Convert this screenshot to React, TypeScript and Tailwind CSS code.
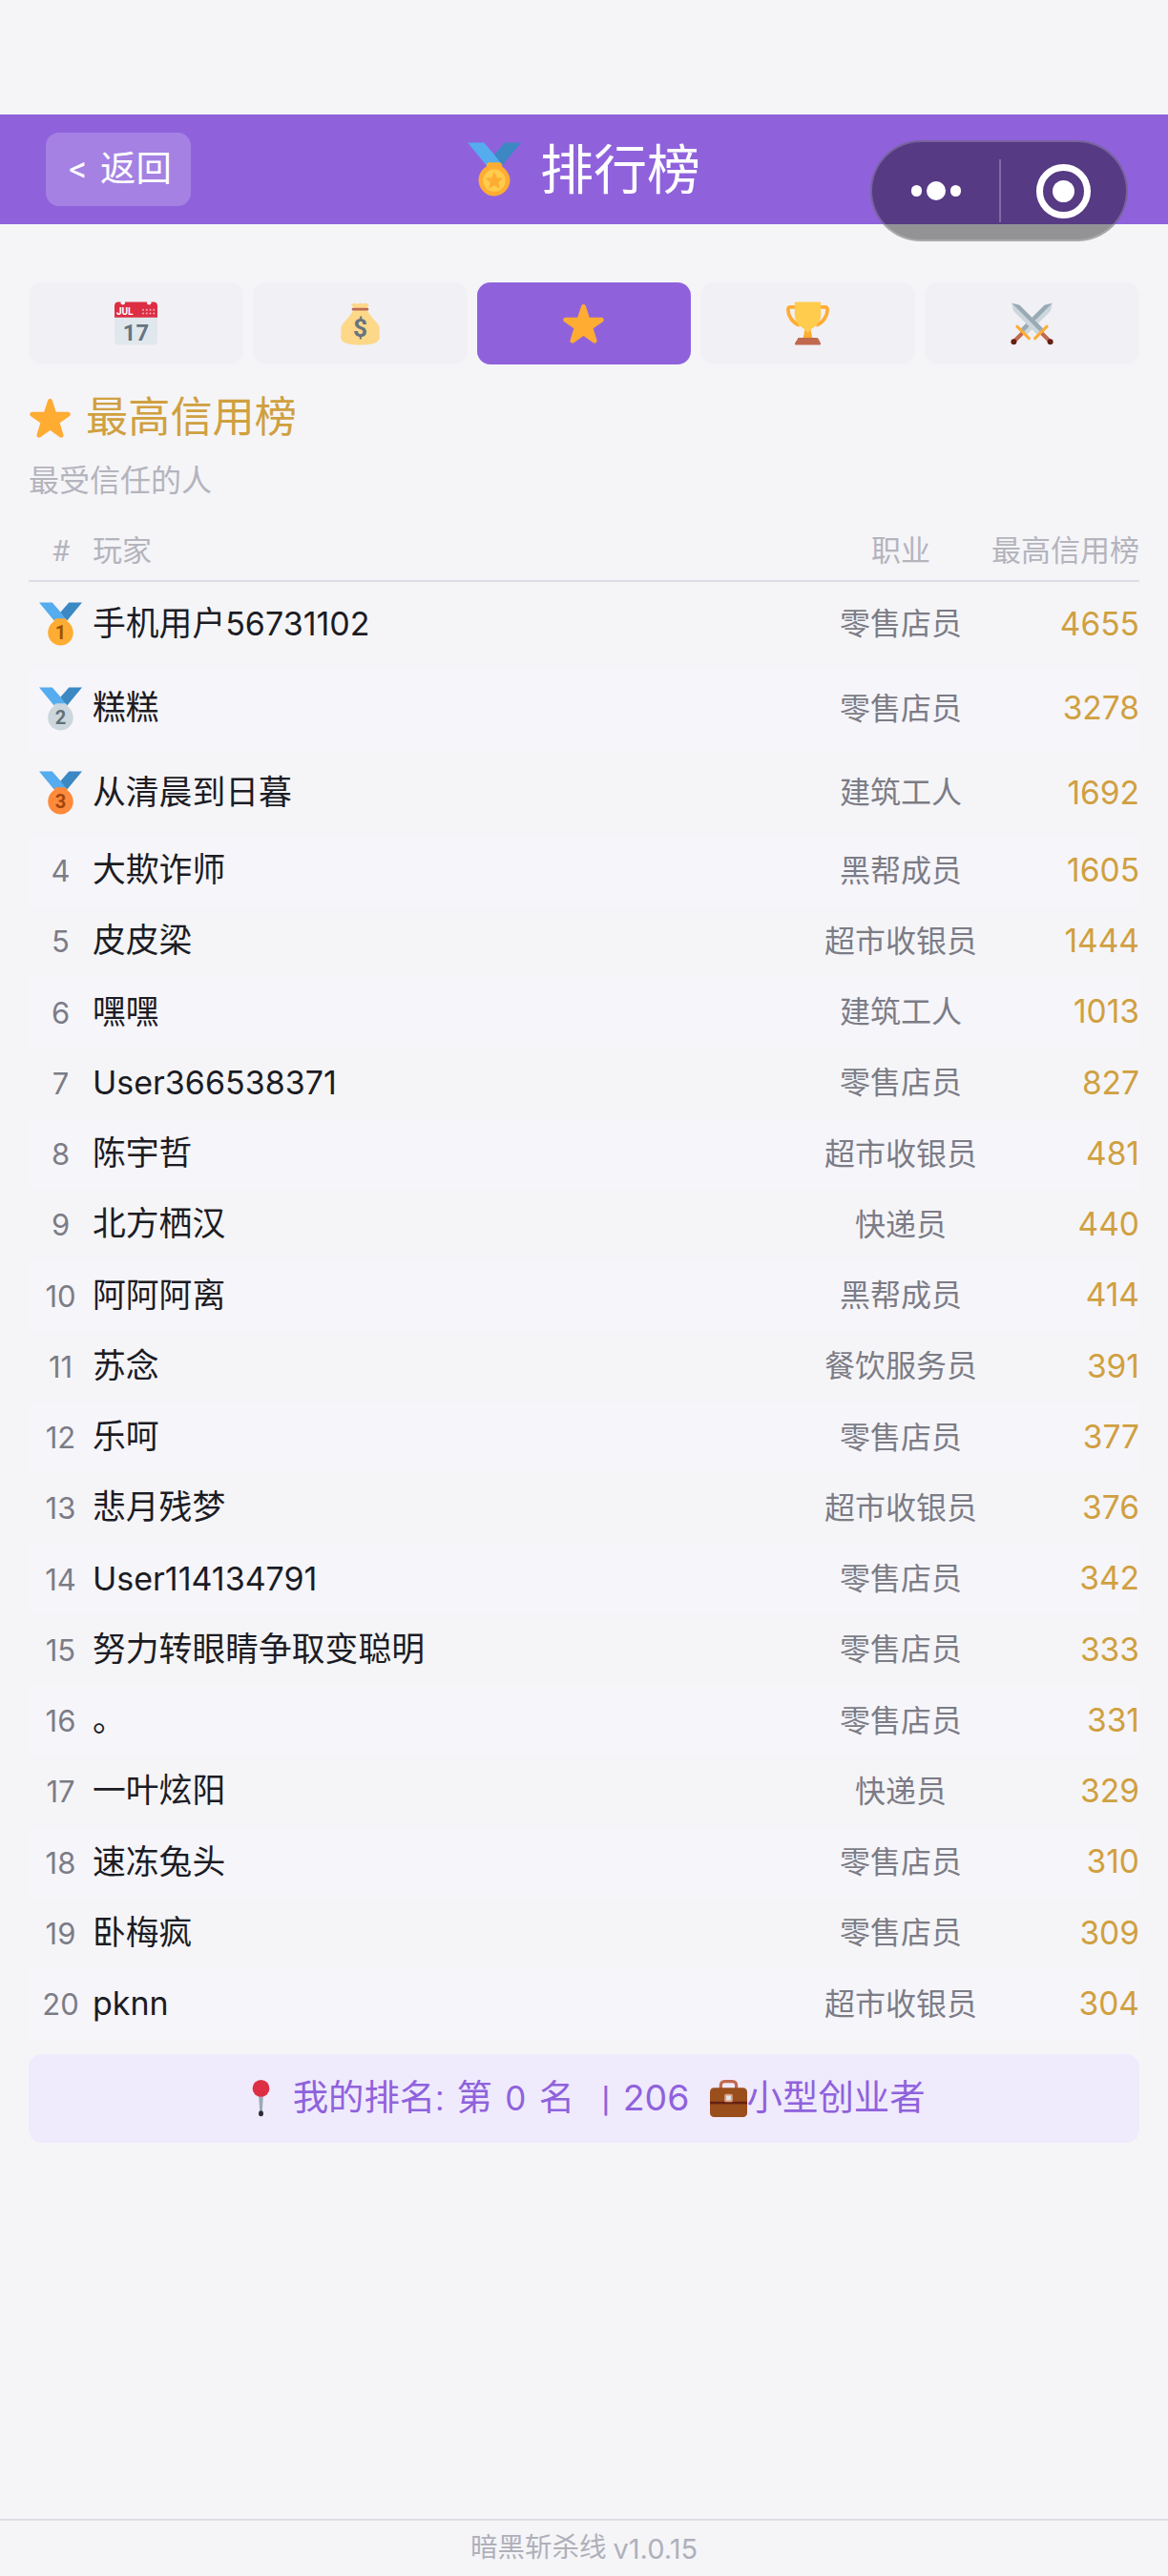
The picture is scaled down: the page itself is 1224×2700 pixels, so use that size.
import React from "react";

const Ribbon = () => (
  <>
    <path fill="#55ACEE" d="M18 8L11 0H0l14 17 11.5-4.75z" />
    <path fill="#3B88C3" d="M25 0l-7 8 5.4 7.3 1.2-1.5L36 0z" />
  </>
);

const RankMedal = ({ n }: { n: number }) => {
  const fill = n === 1 ? "#FFAC33" : n === 2 ? "#CCD6DD" : "#FF8A3B";
  const ink = n === 1 ? "#9E5200" : n === 2 ? "#627077" : "#A0460F";
  return (
    <svg viewBox="0 0 36 36" className="w-[45px] h-[46px] block">
      <Ribbon />
      <path fill={fill} d="M23.2 15.500c.1-.2.1-.2.1-.2 0-1.100-.9-2-2-2h-6.600c-1.100 0-2 .9-2 2 0 0 0 0 .1.200-3.200 1.800-5.400 5.800-5.400 9.800C7.400 31.200 12.200 36 18 36s10.600-4.800 10.600-10.700c0-4-2.200-8-5.400-9.800z" />
      <text x="18" y="31" textAnchor="middle" fontSize="16" fontWeight="700" fontFamily="Roboto, sans-serif" fill={ink}>{n}</text>
    </svg>
  );
};

const SportsMedal = () => (
  <svg viewBox="0 0 36 36" className="w-[56px] h-[57px] block">
    <Ribbon />
    <path fill="#FFAC33" d="M23.2 16c.1-.2.1-.4.1-.7 0-1.100-.9-2-2-2h-6.600c-1.100 0-2 .9-2 2 0 .3 0 .5.1.7-3.200 1.800-5.400 5.300-5.400 9.300C7.400 31.200 12.500 36 18 36s10.600-4.800 10.600-10.700c0-4-2.800-7.500-5.400-9.300z" />
    <circle cx="18" cy="25.500" r="7.500" fill="#FFCC4D" />
    <path fill="#FFAC33" d="M18 19.500l1.700 4.100 4.300.3-3.300 2.800 1 4.300-3.700-2.300-3.700 2.300 1-4.300-3.300-2.800 4.300-.3z" />
  </svg>
);

const Star = ({ cls }: { cls: string }) => (
  <svg viewBox="0 0 36 36" className={cls}>
    <path fill="#FFAC33" d="M27.287 34.627c-.404 0-.806-.124-1.152-.371L18 28.422l-8.135 5.834c-.693.496-1.623.496-2.312-.008-.689-.499-.979-1.385-.721-2.194l3.034-9.792-8.062-5.681c-.685-.505-.97-1.393-.708-2.203.264-.808 1.016-1.357 1.866-1.363L12.947 13l3.179-9.549c.268-.809 1.023-1.353 1.874-1.353.851 0 1.606.545 1.875 1.353L23 13l10.036.015c.853.006 1.606.556 1.867 1.363.263.81-.022 1.698-.708 2.203l-8.062 5.681 3.034 9.792c.26.809-.033 1.695-.72 2.194-.347.254-.753.379-1.16.379z" />
  </svg>
);

const Calendar = () => (
  <svg viewBox="0 0 36 36" className="w-[45px] h-[46px] block">
    <path fill="#E1E8ED" d="M36 33c0 1.700-1.300 3-3 3H3c-1.700 0-3-1.300-3-3V8h36z" />
    <path fill="#DD2E44" d="M36 13H0V3c0-1.700 1.300-3 3-3h30c1.700 0 3 1.300 3 3z" />
    <circle cx="7" cy="0.500" r="1.800" fill="#F2F1F6" />
    <circle cx="29" cy="0.500" r="1.800" fill="#F2F1F6" />
    <text x="1.500" y="10.500" fontSize="8" fontWeight="700" fontFamily="Roboto, sans-serif" fill="#fff">JUL</text>
    <g fill="#F4ABBA">
      <circle cx="24" cy="6.500" r=".8" /><circle cx="27" cy="6.500" r=".8" /><circle cx="30" cy="6.500" r=".8" /><circle cx="33" cy="6.500" r=".8" />
      <circle cx="24" cy="9.500" r=".8" /><circle cx="27" cy="9.500" r=".8" /><circle cx="30" cy="9.500" r=".8" /><circle cx="33" cy="9.500" r=".8" />
    </g>
    <text x="18" y="32" textAnchor="middle" fontSize="19" fontWeight="700" fontFamily="Roboto, sans-serif" fill="#66757F">17</text>
  </svg>
);

const MoneyBag = () => (
  <svg viewBox="0 0 36 36" className="w-[45px] h-[46px] block">
    <path fill="#FDD888" d="M12 7h12c1 3 4 6 7.500 10 3 3.500 3 5 2.500 8-.5 3 1 3 0 6-1 3-5 5-16 5S3 34 2 31s.5-3 0-6-.5-4.500 2.500-8C8 13 11 10 12 7z" />
    <path fill="#FDD888" d="M10.500 1.500c1 .6 2-.8 3.200-.4 1.300.4 1.800 1 3 .2s2.200-.6 3.200.1c1 .6 1.800-.5 3-.3 1.300.2 2.400.3 2.100 1.500-.3 1.100-1.300 1.700-1.500 2.900H12.500c-.2-1.200-1.300-1.800-1.800-2.800-.3-.5-.4-1-.2-1.200z" />
    <rect x="11" y="5" width="14" height="2.200" rx="1" fill="#BF6952" />
    <text x="18" y="29.500" textAnchor="middle" fontSize="21" fontWeight="700" fontFamily="Roboto, sans-serif" fill="#67757F">$</text>
  </svg>
);

const Trophy = () => (
  <svg viewBox="0 0 36 36" className="w-[45px] h-[46px] block">
    <path fill="none" stroke="#FFAC33" strokeWidth="3" d="M8 4.200H3.500C2 4.200 1.500 5 1.500 6.500c0 5 3.500 11 9.500 13" />
    <path fill="none" stroke="#FFAC33" strokeWidth="3" d="M28 4.200h4.500c1.500 0 2 .8 2 2.300 0 5-3.500 11-9.500 13" />
    <path fill="#FFAC33" d="M15.800 22h4.400l1.800 8.500H14z" />
    <path fill="#FFCC4D" d="M7 1c0-.6.4-1 1-1h20c.6 0 1 .4 1 1v9c0 7-4 10-7 12-2 1.300-3 2-3 3.500h-2c0-1.500-1-2.200-3-3.500-3-2-7-5-7-12z" />
    <path fill="#C1694F" d="M9.500 31c0-.6.500-1 1-1h15c.5 0 1 .4 1.500 1l1.800 3.500c.3.800-.3 1.500-1 1.500H8.200c-.7 0-1.300-.7-1-1.500z" />
  </svg>
);

const Sword = () => (
  <>
    <path fill="#CCD6DD" d="M1 1l6.500 1.500L28 23l-5 5L2.500 7.500z" />
    <path fill="#99AAB5" d="M1 1l6.500 1.500L28 23l-2.500 2.500z" />
    <path stroke="#C1694F" strokeWidth="3.200" d="M26 26l7 7" />
    <path stroke="#FFAC33" strokeWidth="2.400" strokeLinecap="round" d="M20.500 30.500l10-10" />
    <circle cx="33.300" cy="33.300" r="2.400" fill="#662113" />
  </>
);

const Swords = () => (
  <svg viewBox="0 0 36 36" className="w-[45px] h-[46px] block">
    <g transform="translate(36 0) scale(-1 1)"><Sword /></g>
    <Sword />
  </svg>
);

const Pin = () => (
  <svg viewBox="0 0 36 36" className="w-[39px] h-[39px] block">
    <path fill="#99AAB5" d="M15.800 14h4.400l-1 17h-2.400z" />
    <ellipse cx="18" cy="32.500" rx="2.300" ry="2.800" fill="#292F33" />
    <circle cx="18" cy="8.200" r="8.200" fill="#DD2E44" />
  </svg>
);

const Briefcase = () => (
  <svg viewBox="0 0 36 36" className="w-[39px] h-[39px] block">
    <path fill="none" stroke="#C1694F" strokeWidth="3" d="M10.500 9V5c0-2 1.500-3.500 3.500-3.500h8c2 0 3.500 1.500 3.500 3.500v4" />
    <rect x="0" y="7.500" width="36" height="28.500" rx="4" fill="#9A4E1C" />
    <rect x="0" y="21" width="36" height="2.400" fill="#662113" />
    <rect x="14" y="13.500" width="8" height="8" rx="1.500" fill="#D99E82" />
    <rect x="15.800" y="15.300" width="4.400" height="4.400" fill="#E1E8ED" />
  </svg>
);

const Name = ({ text }: { text: string }) => (
  <span className="text-[34.8px] leading-none text-[#1c1c24] whitespace-nowrap">
    {text.split(/([A-Za-z0-9]+)/).map((part, i) =>
      i % 2 === 1 ? (
        <span key={i} className="font-['Inter',sans-serif] text-[34px]">{part}</span>
      ) : (
        <span key={i}>{part}</span>
      )
    )}
  </span>
);

const rows = [
  ["手机用户56731102", "零售店员", "4655"],
  ["糕糕", "零售店员", "3278"],
  ["从清晨到日暮", "建筑工人", "1692"],
  ["大欺诈师", "黑帮成员", "1605"],
  ["皮皮梁", "超市收银员", "1444"],
  ["嘿嘿", "建筑工人", "1013"],
  ["User366538371", "零售店员", "827"],
  ["陈宇哲", "超市收银员", "481"],
  ["北方栖汉", "快递员", "440"],
  ["阿阿阿离", "黑帮成员", "414"],
  ["苏念", "餐饮服务员", "391"],
  ["乐呵", "零售店员", "377"],
  ["悲月残梦", "超市收银员", "376"],
  ["User114134791", "零售店员", "342"],
  ["努力转眼睛争取变聪明", "零售店员", "333"],
  ["。", "零售店员", "331"],
  ["一叶炫阳", "快递员", "329"],
  ["速冻兔头", "零售店员", "310"],
  ["卧梅疯", "零售店员", "309"],
  ["pknn", "超市收银员", "304"],
];

const tabBase = "h-[86px] rounded-[14px] flex items-center justify-center";
const tabIdle = "bg-[#f1f0f5]";
const cols = "grid grid-cols-[67px_1fr_184px_158px] items-center";

export default function App() {
  return (
    <div className="relative min-h-[2700px] flex flex-col bg-[#f5f5f8] pt-[120px] font-['Roboto','Noto_Sans_CJK_SC',sans-serif]">
      <header className="h-[115px] bg-[#8f62dc] grid grid-cols-[1fr_auto_1fr] items-center text-white">
        <div className="pl-[48px]">
          <div className="w-[152px] h-[77px] pl-[4px] rounded-[14px] bg-white/20 flex items-center justify-center gap-[14px] text-[37.4px] leading-none">
            <span>&lt;</span>
            <span>返回</span>
          </div>
        </div>
        <div className="flex items-center gap-[20px]">
          <SportsMedal />
          <span className="text-[56px] leading-none pt-[3px]">排行榜</span>
        </div>
        <div />
      </header>

      <div className="absolute left-[912px] top-[147px] w-[270px] h-[106px] rounded-[53px] bg-black/40 border-2 border-white/20 flex items-center">
        <div className="w-[133px] h-full flex items-center justify-center gap-[5px]">
          <span className="w-[11px] h-[12px] rounded-full bg-white" />
          <span className="w-[20px] h-[20px] rounded-full bg-white" />
          <span className="w-[11px] h-[12px] rounded-full bg-white" />
        </div>
        <div className="w-[2px] h-[66px] bg-white/25" />
        <div className="flex-1 flex items-center justify-center">
          <div className="w-[57px] h-[57px] rounded-full border-[7px] border-white flex items-center justify-center">
            <span className="w-[23px] h-[23px] rounded-full bg-white" />
          </div>
        </div>
      </div>

      <main className="px-[30px] pt-[61px]">
        <div className="grid grid-cols-5 gap-[10px]">
          <div className={`${tabBase} ${tabIdle}`}><Calendar /></div>
          <div className={`${tabBase} ${tabIdle}`}><MoneyBag /></div>
          <div className={`${tabBase} bg-[#8f62dc]`}><Star cls="w-[45px] h-[46px] block" /></div>
          <div className={`${tabBase} ${tabIdle}`}><Trophy /></div>
          <div className={`${tabBase} ${tabIdle}`}><Swords /></div>
        </div>

        <div className="mt-[26px] h-[60px] flex items-center gap-[15px] text-[44.2px] leading-none text-[#d0a040]">
          <Star cls="w-[45px] h-[46px] block" />
          <span>最高信用榜</span>
        </div>
        <div className="mt-[16px] h-[40px] flex items-center text-[32px] leading-none text-[#b4b4bd]">最受信任的人</div>

        <div className={`${cols} mt-[22px] h-[64px] border-b-2 border-[#dddde6] text-[31px] leading-none text-[#b4b4bd]`}>
          <span className="text-center">#</span>
          <span>玩家</span>
          <span className="text-center">职业</span>
          <span className="text-right">最高信用榜</span>
        </div>

        <div>
          {rows.map((r, i) => (
            <div
              key={i}
              className={`${cols} ${i < 3 ? "h-[88.5px]" : "h-[74.25px]"} ${i % 2 === 1 ? "bg-[#f6f5fa]" : ""}`}
            >
              <div className="flex justify-center font-['Inter',sans-serif] text-[31px] leading-none text-[#7c7c86]">
                {i < 3 ? <RankMedal n={i + 1} /> : <span>{i + 1}</span>}
              </div>
              <Name text={r[0]} />
              <span className="text-[32px] leading-none text-[#7c7c86] text-center">{r[1]}</span>
              <span className="font-['Inter',sans-serif] text-[33.5px] leading-none text-[#d0a040] text-right">{r[2]}</span>
            </div>
          ))}
        </div>

        <div className="mt-[15px] h-[93px] rounded-[14px] bg-[#f0eafd] flex items-center justify-center text-[37.4px] leading-none text-[#8f62dc] whitespace-pre [word-spacing:4px]">
          <Pin />
          <span> 我的排名: 第 <span className="font-['Inter',sans-serif] text-[35px]">0</span> 名 <span className="ml-[15px]">|</span> <span className="font-['Inter',sans-serif] text-[37.4px] mr-[8px]">206</span> </span>
          <Briefcase />
          <span>小型创业者</span>
        </div>
      </main>

      <footer className="mt-auto h-[60px] border-t-2 border-[#dddde6] flex items-center justify-center text-[28.5px] leading-none text-[#b0b0ba] whitespace-pre">
        暗黑斩杀线 <span className="font-['Inter',sans-serif] text-[29px]">v1.0.15</span>
      </footer>
    </div>
  );
}
